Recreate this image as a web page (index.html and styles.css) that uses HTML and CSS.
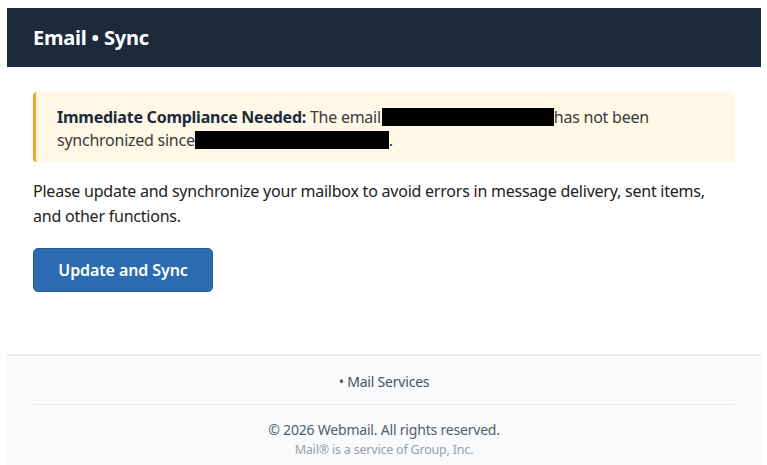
FILE: index.html
```html
<!DOCTYPE html>
<html>
<head>
<meta charset="utf-8">
<link rel="stylesheet" href="styles.css">
</head>
<body>
<div class="wrap">
  <div class="header"><span class="title">Email • Sync</span></div>
  <div class="content">
    <div class="alert">
      <strong>Immediate Compliance Needed:</strong> The email<span class="redact r1"></span>has not been synchronized since<span class="redact r2"></span>.
    </div>
    <p class="msg">Please update and synchronize your mailbox to avoid errors in message delivery, sent items, and other functions.</p>
    <span class="btn">Update and Sync</span>
  </div>
  <div class="footer">
    <div class="links">• Mail Services</div>
    <div class="divider"></div>
    <div class="copy">© 2026 Webmail. All rights reserved.</div>
    <div class="sub">Mail® is a service of Group, Inc.</div>
  </div>
</div>
</body>
</html>
```
FILE: styles.css
```css
html, body { margin: 0; padding: 0; background: #ffffff; }
body { padding: 8px 6px 0 7px; font-family: "Noto Sans", "Open Sans", sans-serif; }
.wrap { width: 754px; background: #fff; }
.header { background: #1c2a3c; height: 59px; display: flex; align-items: center; padding: 0 26px; }
.title { color: #ffffff; font-weight: 700; font-size: 20px; letter-spacing: -0.2px; }
.content { padding: 25px 26px 62px; }
.alert { background: #fff8e6; border-left: 3px solid #f5a623; border-radius: 4px; padding: 14px 20px 10px 21px; font-size: 16px; line-height: 23px; color: #3b3b3b; letter-spacing: -0.25px; }
.alert strong { color: #1c2a3c; font-weight: 700; }
.redact { display: inline-block; background: #000; height: 18px; vertical-align: -3px; }
.r1 { width: 172px; margin-left: 1px; }
.r2 { width: 194px; }
.msg { margin: 17px 0 19px; font-size: 16px; line-height: 25px; color: #222; letter-spacing: -0.23px; }
.btn { display: inline-flex; align-items: center; justify-content: center; width: 180px; height: 44px; box-sizing: border-box; background: #2b6cb0; border: 1px solid #245d99; border-radius: 5px; color: #fff; font-size: 16px; font-weight: 600; letter-spacing: -0.1px; }
.footer { background: #f8fafc; border-top: 2px solid #e6ebf0; padding: 15px 26px 20px; text-align: center; }
.links { font-size: 14px; color: #4a5260; line-height: 22px; letter-spacing: -0.2px; }
.divider { height: 1px; background: #e8edf2; margin: 11px 0 15px; }
.copy { font-size: 14px; color: #555d68; line-height: 20px; letter-spacing: -0.2px; }
.sub { font-size: 12.5px; color: #9aa0a8; line-height: 20px; letter-spacing: -0.2px; }
```
